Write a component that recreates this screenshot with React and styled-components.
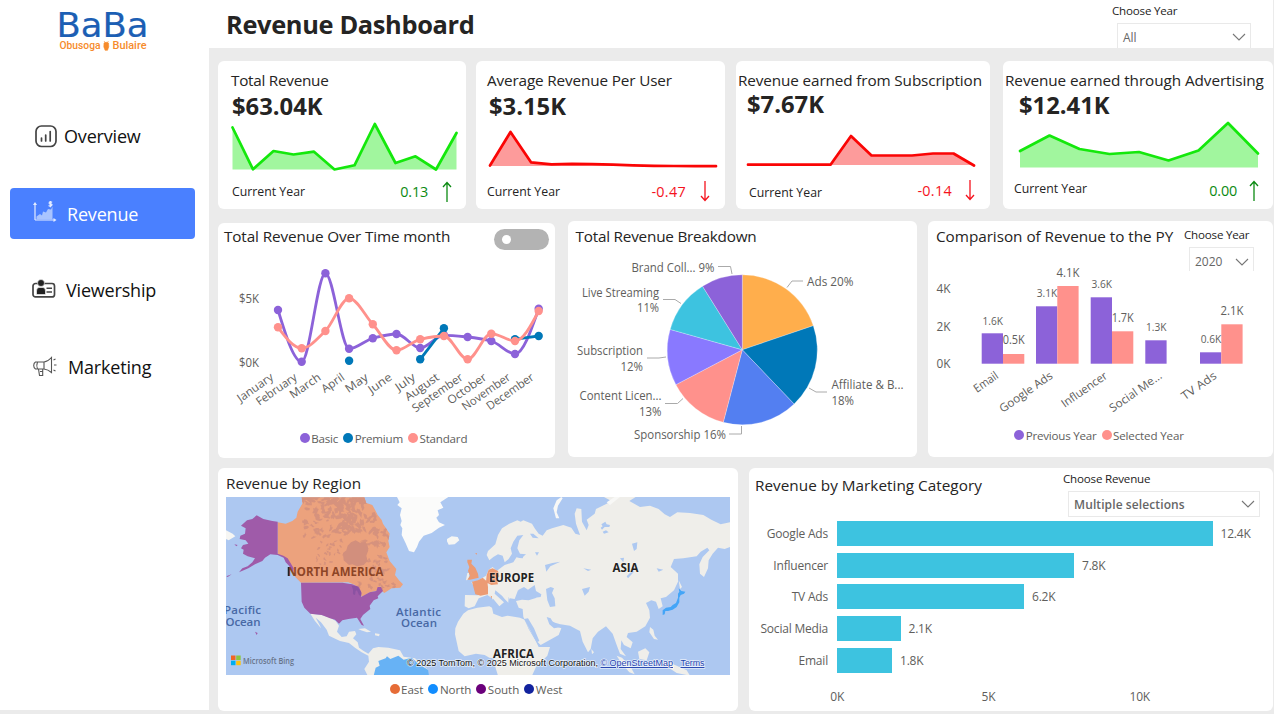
import React from "react";
import styled, { createGlobalStyle } from "styled-components";

const GlobalStyle = createGlobalStyle`
  *, *::before, *::after { box-sizing: border-box; }
  body { margin: 0; background: #ebebeb; overflow: hidden; font-family: "Open Sans", "Noto Sans", sans-serif; color: #252423; }
  svg { display: block; flex: none; }
  svg text { font-family: "Open Sans", "Noto Sans", sans-serif; }
`;

const Page = styled.div`display: flex; width: 1274px; height: 714px; background: #ebebeb;`;
const Sidebar = styled.aside`width: 209px; height: 710px; background: #fff; display: flex; flex-direction: column;`;
const LogoWrap = styled.div`height: 111px; padding: 8px 0 0 54px;`;
const Nav = styled.nav`display: flex; flex-direction: column; gap: 26.5px; padding-left: 9.5px;`;
const NavItem = styled.a`
  display: flex; align-items: center; width: 185px; height: 50.5px; border-radius: 4px;
  padding-left: ${(p) => p.$pad}px; gap: ${(p) => p.$gap}px; padding-top: ${(p) => (p.$active ? 1 : 0)}px;
  background: ${(p) => (p.$active ? "#4a80ff" : "transparent")};
  color: ${(p) => (p.$active ? "#fff" : "#111")};
  font-size: 18px; letter-spacing: -0.18px; white-space: nowrap;
`;
const Main = styled.main`width: 1065px; display: flex; flex-direction: column;`;
const Header = styled.header`
  width: 1064px; height: 48px; background: #fff; display: flex; justify-content: space-between;
  padding: 0 22px 0 17px; overflow: hidden;
`;
const PageTitle = styled.h1`margin: 0; font-size: 25.4px; line-height: 49px; letter-spacing: -0.35px; font-weight: 700;`;
const Content = styled.div`display: flex; flex-direction: column; padding: 13px 0 0 9px;`;
const Row = styled.section`display: grid; grid-template-columns: ${(p) => p.$cols}; column-gap: ${(p) => p.$gap}px; margin-bottom: ${(p) => p.$mb}px;`;
const Card = styled.article`
  background: #fff; border-radius: 6px; height: ${(p) => p.$h}px; margin-top: ${(p) => p.$mt || 0}px;
  width: ${(p) => (p.$w ? `${p.$w}px` : "auto")}; display: flex; flex-direction: column; overflow: hidden; min-width: 0;
`;
const CardTitle = styled.h2`
  margin: 0; font-weight: 400; font-size: 15.3px; line-height: 20px; white-space: nowrap; flex: none;
  height: ${(p) => (p.$h ? `${p.$h}px` : "auto")};
  letter-spacing: ${(p) => p.$ls ?? -0.1}px; padding: ${(p) => p.$pt || 0}px 0 0 ${(p) => p.$pl || 0}px;
`;
const KpiValue = styled.div`
  font-size: 23.8px; font-weight: 700; line-height: 30px; margin-top: ${(p) => p.$mt}px;
  padding-left: ${(p) => p.$pl}px; height: ${(p) => 32 - p.$mt}px;
`;
const KpiFooter = styled.div`
  display: flex; align-items: center; justify-content: space-between; height: 30px;
  padding: 0 ${(p) => p.$pr}px 0 ${(p) => p.$pl}px; margin-top: ${(p) => p.$mt || 0}px;
`;
const KpiLabel = styled.span`font-size: 12.3px; position: relative; top: ${(p) => p.$dy || 0}px;`;
const Delta = styled.span`
  display: flex; align-items: center; gap: ${(p) => p.$gap}px; font-size: 14.4px; letter-spacing: ${(p) => p.$ls}px;
  color: ${(p) => p.$color};
`;
const CardHeader = styled.div`display: flex; justify-content: space-between; height: ${(p) => p.$h}px; padding-right: ${(p) => p.$pr}px; flex: none;`;
const Field = styled.div`display: flex; flex-direction: column; padding-top: ${(p) => p.$pt}px; width: ${(p) => p.$w}px;`;
const FieldLabel = styled.label`font-size: 11.6px; line-height: 16px; letter-spacing: -0.2px; height: ${(p) => p.$h}px; flex: none; white-space: nowrap;`;
const Select = styled.div`
  display: flex; align-items: center; justify-content: space-between; margin-left: ${(p) => p.$ml}px; flex: none;
  height: ${(p) => p.$h}px; border: solid #e9e9e9; border-width: ${(p) => (p.$open ? "1px 1px 0" : "1px")};
  padding: ${(p) => p.$pt || 0}px 4px 0 5px; font-size: 12px; letter-spacing: ${(p) => p.$ls || 0}px;
  color: #666; font-weight: ${(p) => (p.$bold ? 600 : 400)};
`;
const Toggle = styled.div`
  width: 55px; height: 21px; border-radius: 11px; background: #b3b3b3; display: flex; align-items: center; padding-left: 8px; margin-top: 6px;
  &::after { content: ""; width: 9px; height: 9px; border-radius: 50%; background: #fff; }
`;
const Legend = styled.div`display: flex; justify-content: center; gap: 5px; padding-right: ${(p) => p.$pr || 0}px; height: 18px; flex: none;`;
const LegendItem = styled.span`
  display: flex; align-items: center; gap: 1.5px; font-size: 11.6px; letter-spacing: ${(p) => p.$ls ?? -0.25}px; color: #605e5c; white-space: nowrap;
  &::before { content: ""; width: 10px; height: 10px; border-radius: 50%; background: ${(p) => p.$color}; }
`;
const MapFrame = styled.div`width: 504px; height: 178px; margin: 5px 0 5px 8px; overflow: hidden; flex: none;`;
const BarList = styled.div`display: flex; flex-direction: column; gap: 6.7px; padding-top: 4px;`;
const BarRow = styled.div`display: flex; align-items: center; height: 25px; font-size: 12px; letter-spacing: -0.2px; color: #605e5c;`;
const BarName = styled.span`width: 79px; text-align: right; margin-right: 9px; white-space: nowrap;`;
const Bar = styled.span`height: 25px; background: #3dc3e0; margin-right: 8px;`;
const BarAxis = styled.div`display: flex; margin: 16px 0 0 12.5px; font-size: 12px; letter-spacing: -0.2px; line-height: 16px; color: #605e5c;`;
const Tick = styled.span`width: 151.3px; text-align: center;`;

const Chevron = () => (
  <svg width="14" height="8" viewBox="0 0 14 8" fill="none" stroke="#777" strokeWidth="1.1"><path d="M1 1l6 6 6-6" /></svg>
);

const Logo = () => (
  <svg width="100" height="46" viewBox="54 8 100 46">
    <g fontSize="33" fill="#1c5fb4" stroke="#1c5fb4" strokeWidth=".2">
      <text x="56.500" y="37.300" textLength="46" lengthAdjust="spacingAndGlyphs" style={{ fontFamily: "DejaVu Sans" }}>Ba</text>
      <text x="102.500" y="37.300" textLength="46" lengthAdjust="spacingAndGlyphs" style={{ fontFamily: "DejaVu Sans" }}>Ba</text>
    </g>
    <g fill="#f68b2c" fontSize="11">
      <text x="59.500" y="49" textLength="41" lengthAdjust="spacingAndGlyphs" style={{ fontFamily: "Roboto", fontWeight: 500 }}>Obusoga</text>
      <text x="112.500" y="49" textLength="34" lengthAdjust="spacingAndGlyphs" style={{ fontFamily: "Roboto", fontWeight: 500 }}>Bulaire</text>
      <path d="M104 43q2-1.500 4.500 0 1 4-1 7.300h-2.400q-2-3.300-1.100-7.300zM104 41l1.500 2M108.500 41l-1.500 2" stroke="#f68b2c" strokeWidth=".6" />
    </g>
  </svg>
);

const IconOverview = () => (
  <svg width="22" height="23" viewBox="0 0 22 23" fill="none" stroke="#444" strokeWidth="1.700" strokeLinecap="round">
    <rect x="1" y="1" width="20" height="20.500" rx="5.500" />
    <path d="M6.500 13v3M10.700 10v6M15.200 6.500v9.500" />
  </svg>
);
const IconRevenue = () => (
  <svg width="25" height="26" viewBox="0 0 25 26">
    <path d="M3 19V2.500M3 19h19.500" stroke="#e4ecff" strokeWidth="1.200" fill="none" />
    <path d="M3 1l-2 3h4zM24.500 19l-3-2v4z" fill="#e4ecff" />
    <path d="M4.500 18.500v-3l3.500-2.500 2 1.500 1-4 3 1 2-3.500 3 .500 1.500-3V18.500z" fill="#a9c4ff" />
    <path d="M20.200 1.300q-3-1.200-3 .600t2 1.100q1.700.700 0 1.700t-2.500-.300M18.600 0v6.200" stroke="#e4ecff" strokeWidth="1.200" fill="none" />
  </svg>
);
const IconViewer = () => (
  <svg width="24" height="22" viewBox="0 0 24 22" fill="none" stroke="#444">
    <rect x="1" y="4.500" width="21.500" height="13.400" rx="2.500" strokeWidth="1.700" />
    <path d="M14.500 9.200h5.500M14.500 13h5.500" strokeWidth="1.500" />
    <path d="M4.500 15.500v-3.500q0-3.500 2.500-3.500h4q2.500 0 2.500 3.500v3.500z" fill="#222" stroke="#fff" strokeWidth=".6" />
    <circle cx="9" cy="4" r="3.500" fill="#222" stroke="#fff" strokeWidth=".6" />
  </svg>
);
const IconMarketing = () => (
  <svg width="24" height="22" viewBox="0 0 24 22" fill="none" stroke="#555" strokeWidth="1.100">
    <path d="M2.500 6h8.500q4-.500 7.500-4.500v15q-3.500-3-7.500-3.500h-8.500q-1.800-1-1.800-3.500t1.800-3.500zM11 6v7M4.500 6q-1.500 3.500 0 7M18.500 1v16" />
    <path d="M5.500 13l1 6.500h3.200v-6.500M7 15.500h2.500M20.500 4l2-1M21 9h2.500M20.500 14l2 1" />
  </svg>
);

const ArrowIcon = ({ up }) => (
  <svg width="10" height="21" viewBox="0 0 10 21" fill="none" stroke="currentColor" strokeWidth="1.300">
    <path d={up ? "M5 21V2M1 6l4-4.500L9 6" : "M5 0v19M1 15l4 4.500L9 15"} />
  </svg>
);

/* Fixed-width chart label */
const Label = ({ x, y, w, anchor, children, size = 12, ...rest }) => (
  <text x={x} y={y} fontSize={size} fill="#605e5c" textLength={w} lengthAdjust="spacingAndGlyphs" textAnchor={anchor} {...rest}>{children}</text>
);

const GREEN = "#14e80c", RED = "#fa0505";
const kpis = [
  { title: "Total Revenue", value: "$63.04K", x: 218, w: 248, up: true, delta: "0.13", tp: 13, vp: 14, vm: 1, fp: 14, fr: 14, gap: 14, base: 169.5, ls: -0.27,
    pts: [[232.500, 127.500], [253, 169.300], [273.500, 151], [293.500, 154.500], [314, 151.700], [334.500, 169.500], [354.500, 165.300], [374.800, 124], [395.500, 163], [415.500, 156.300], [436, 169.500], [456.500, 133]] },
  { title: "Average Revenue Per User", value: "$3.15K", x: 476, w: 249, delta: "-0.47", tp: 11, vp: 13, vm: 1, fp: 11, fr: 15, gap: 14, base: 166, ls: -0.15,
    pts: [[490, 165.500], [510.500, 132], [531, 162.300], [551.500, 164.300], [572, 163.800], [592, 164.200], [613, 164.600], [633, 165.300], [654, 165.800], [674, 166], [695, 166.100], [716, 166.200]] },
  { title: "Revenue earned from Subscription", value: "$7.67K", x: 736, w: 254, delta: "-0.14", tp: 2, vp: 11, vm: -1, fp: 13, fr: 15, gap: 13, base: 165, fy: -1, ly: 2, ls: -0.13,
    pts: [[748, 164.700], [830.500, 164.700], [851, 136], [871.500, 155.500], [912, 155.500], [933, 153.500], [953.500, 153.500], [974, 165.500]] },
  { title: "Revenue earned through Advertising", value: "$12.41K", x: 1003, w: 270, up: true, delta: "0.00", tp: 2, vp: 16, vm: 0, fp: 11, fr: 14, gap: 12, base: 167.500, fy: -1, ly: -2, ls: -0.07,
    pts: [[1020, 151], [1049.500, 135.500], [1079.500, 149], [1109.500, 154], [1139, 152], [1168.500, 160.500], [1198.500, 150.500], [1228, 123], [1258, 153.500]] },
];

const Kpi = ({ k }) => {
  const line = k.pts.map((p) => p.join(",")).join(" ");
  const color = k.up ? GREEN : RED;
  const first = k.pts[0][0], last = k.pts[k.pts.length - 1][0];
  return (
    <Card $h={148} $w={k.w}>
      <CardTitle $pt={9} $pl={k.tp} $ls={k.ls}>{k.title}</CardTitle>
      <KpiValue $mt={k.vm} $pl={k.vp}>{k.value}</KpiValue>
      <svg width={k.w} height="54" viewBox={`${k.x} 122 ${k.w} 54`} style={{ overflow: "visible" }}>
        <polygon points={`${first},${k.base} ${line} ${last},${k.base}`} fill={color} opacity=".4" />
        <polyline points={line} fill="none" stroke={color} strokeWidth="2.700" strokeLinejoin="round" strokeLinecap="round" />
      </svg>
      <KpiFooter $pl={k.fp} $pr={k.fr} $mt={k.fy}>
        <KpiLabel $dy={k.ly}>Current Year</KpiLabel>
        <Delta $color={k.up ? "#0b8a12" : "#f5121d"} $gap={k.gap} $ls={k.up ? -0.2 : 0.3}>{k.delta}<ArrowIcon up={k.up} /></Delta>
      </KpiFooter>
    </Card>
  );
};

/* Monotone cubic interpolation through the points */
function smooth(pts) {
  const n = pts.length, d = [], m = [];
  for (let i = 0; i < n - 1; i++) d.push((pts[i + 1][1] - pts[i][1]) / (pts[i + 1][0] - pts[i][0]));
  for (let i = 0; i < n; i++) {
    if (i === 0) m.push(d[0]);
    else if (i === n - 1) m.push(d[n - 2]);
    else if (d[i - 1] * d[i] <= 0) m.push(0);
    else m.push((2 * d[i - 1] * d[i]) / (d[i - 1] + d[i]));
  }
  if (n > 2) { m[0] = (3 * d[0] - m[1]) / 2; m[n - 1] = (3 * d[n - 2] - m[n - 2]) / 2; }
  let s = `M${pts[0]}`;
  for (let i = 0; i < n - 1; i++) {
    const h = (pts[i + 1][0] - pts[i][0]) / 3;
    s += `C${pts[i][0] + h},${pts[i][1] + m[i] * h} ${pts[i + 1][0] - h},${pts[i + 1][1] - m[i + 1] * h} ${pts[i + 1]}`;
  }
  return s;
}
const mx = (i) => 278 + i * 23.7;
const lineSeries = [
  { color: "#8c62d9", runs: [[0, 310, 361.7, 273.3, 348.7, 338.3, 334, 348, 335.3, 337, 341, 354, 308.7]] },
  { color: "#0078b8", runs: [[3, 360.7], [6, 359.3, 328.3], [10, 339.3, 336]] },
  { color: "#ff918c", runs: [[0, 327.3, 348.3, 331, 298.3, 324.3, 350.3, 339.3, 336, 359.3, 333.7, 341, 311]] },
];
const months = [["January", 41], ["February", 47], ["March", 35], ["April", 25], ["May", 25], ["June", 26], ["July", 22], ["August", 39], ["September", 59], ["October", 45], ["November", 56], ["December", 55]];

const LineChart = () => (
  <svg width="337" height="173" viewBox="218 256 337 173">
    <Label x="239" y="303" w="20">$5K</Label>
    <Label x="239" y="367" w="20">$0K</Label>
    {lineSeries.map((s) => (
      <g key={s.color} stroke={s.color} fill={s.color}>
        {s.runs.map(([start, ...ys]) => {
          const pts = ys.map((y, i) => [mx(start + i), y]);
          return (
            <g key={start}>
              {pts.length > 1 && <path d={smooth(pts)} fill="none" strokeWidth="2.800" />}
              {pts.map((p) => <circle key={p[0]} cx={p[0]} cy={p[1]} r="4.200" stroke="none" />)}
            </g>
          );
        })}
      </g>
    ))}
    {months.map(([m, w], i) => (
      <Label key={m} x="0" y="0" w={w} anchor="end" size={11.5} transform={`translate(${mx(i) - 3.800} 379) rotate(-35)`}>{m}</Label>
    ))}
  </svg>
);

const slices = [[0, 71.2, "#ffae4c"], [71.2, 136.3, "#0078b8"], [136.3, 194.7, "#537ff1"], [194.7, 242.3, "#ff918c"], [242.3, 285.8, "#8979ff"], [285.8, 328, "#3dc3e0"], [328, 360, "#8c62d9"]];
const onPie = (deg) => [742.3 + 75 * Math.sin((deg * Math.PI) / 180), 349.8 - 75 * Math.cos((deg * Math.PI) / 180)];
const PieChart = () => (
  <svg width="349" height="200" viewBox="568 255 349 200">
    {slices.map(([a, b, c]) => (
      <path key={c} d={`M742.3,349.8L${onPie(a)}A75,75 0 0 1 ${onPie(b)}Z`} fill={c} stroke="#fff" strokeOpacity=".5" strokeWidth=".5" />
    ))}
    <path d="M718 266.500h12.500l1.500 7.500M663 299.500h12l6 4M647 358h12l7-1M665 403.500h12.500l5.500-5M729 434h12.500v-8M787 287.500l5-6.500h11M809 388l7 4h11" fill="none" stroke="#aaa" />
    <Label x="631.500" y="272" w="83">Brand Coll... 9%</Label>
    <Label x="582" y="296.500" w="77">Live Streaming</Label>
    <Label x="637" y="312" w="22">11%</Label>
    <Label x="577" y="355" w="66">Subscription</Label>
    <Label x="620.500" y="371" w="22.500">12%</Label>
    <Label x="579.500" y="400" w="82">Content Licen...</Label>
    <Label x="639" y="416" w="22.500">13%</Label>
    <Label x="634" y="439" w="92">Sponsorship 16%</Label>
    <Label x="807" y="286" w="46.500">Ads 20%</Label>
    <Label x="831.500" y="389" w="72">Affiliate &amp; B...</Label>
    <Label x="831.500" y="405" w="22.500">18%</Label>
  </svg>
);

const groups = [
  { name: "Email", w: 27, x: 981.700, a: 333.3, b: 354, la: ["1.6K", 325, 20.5], lb: ["0.5K", 344, 22] },
  { name: "Google Ads", w: 62, x: 1036, a: 306.3, b: 286, la: ["3.1K", 297, 20.5], lb: ["4.1K", 277, 23] },
  { name: "Influencer", w: 53, x: 1090.700, a: 297.3, b: 331.3, la: ["3.6K", 288, 20.5], lb: ["1.7K", 322, 22] },
  { name: "Social Me...", w: 61, x: 1145.300, a: 340.3, la: ["1.3K", 331, 20.5] },
  { name: "TV Ads", w: 40, x: 1200, a: 352.3, b: 324.3, la: ["0.6K", 343, 20.5], lb: ["2.1K", 315, 23] },
];
const ColumnChart = () => (
  <svg width="345" height="160" viewBox="928 266 345 160">
    {[["4K", 293], ["2K", 331], ["0K", 368]].map(([t, y]) => <Label key={t} x="936.500" y={y} w="14">{t}</Label>)}
    {groups.map((g) => (
      <g key={g.name}>
        <rect x={g.x} y={g.a} width="21.300" height={363.7 - g.a} fill="#8c62d9" />
        {g.b && <rect x={g.x + 21.300} y={g.b} width="21.300" height={363.7 - g.b} fill="#ff918c" />}
        <Label x={g.x + 11} y={g.la[1]} w={g.la[2]} anchor="middle" size={11.500}>{g.la[0]}</Label>
        {g.lb && <Label x={g.x + 32} y={g.lb[1]} w={g.lb[2]} anchor="middle">{g.lb[0]}</Label>}
        <Label x="0" y="0" w={g.w} anchor="end" size={11.500} transform={`translate(${g.x + 17.500} 377.500) rotate(-35)`}>{g.name}</Label>
      </g>
    ))}
  </svg>
);

const CANADA = "M260 97L448 97 454 114 472 120 480 134 488 150 500 165 504 176 524 206 520 228 524 246 514 262 524 288 544 312 540 330 552 346 564 358 556 368 530 370 508 384 498 376 498 364 484 378 464 382 440 396 436 380 420 360 400 352 258 353 240 335 225 300 210 278 188 268 188 172 212 176 232 168 244 158 248 140 262 116Z";

/* Seeded terrain patches: x range, y range, count, patch size */
function terrain(zones) {
  let seed = 11;
  const rnd = () => { seed = (seed * 16807) % 2147483647; return seed / 2147483647; };
  return zones.map(([x0, x1, y0, y1, n, size]) => {
    let d = "";
    for (let i = 0; i < n; i++) {
      const cx = x0 + rnd() * (x1 - x0), cy = y0 + rnd() * (y1 - y0), tilt = rnd() * 6.28;
      for (let j = 0; j < 9; j++) {
        const a = (j / 9) * 6.28, r = size * (0.35 + rnd());
        const px = Math.cos(a) * r * 1.3, py = Math.sin(a) * r * 0.7;
        d += `${j ? "L" : "M"}${(cx + px * Math.cos(tilt) - py * Math.sin(tilt)).toFixed(1)} ${(cy + px * Math.sin(tilt) + py * Math.cos(tilt)).toFixed(1)}`;
      }
      d += "Z";
    }
    return d;
  }).join("");
}
const TERRAIN = terrain([
  [265, 445, 96, 118, 34, 10], [270, 460, 118, 160, 40, 8], [360, 480, 150, 205, 40, 9], [440, 520, 190, 250, 26, 8],
  [265, 350, 160, 225, 26, 6], [300, 390, 225, 300, 26, 4.5], [455, 520, 270, 350, 26, 5.5], [430, 540, 340, 375, 16, 6],
]);

const WorldMap = () => (
  <svg width="504" height="178" viewBox="226 497 504 178">
    <clipPath id="canada"><path d={CANADA} /></clipPath>
    <rect x="226" y="497" width="504" height="178" fill="#adc8f1" />
    {/* Americas and Greenland */}
    <g transform="translate(215 465) scale(.33333)">
      <path fill="#fbfbfa" d="M543 90L554 112 547 120 560 130 555 150 560 168 556 180 562 190 560 210 572 235 582 258 597 262 606 246 612 230 626 212 650 204 672 188 690 180 672 172 664 158 672 150 668 136 685 128 676 112 700 96 700 90Z" />
      <path fill="#f6f6f3" d="M696 222l14-8 18 2 5 10-14 12-18 1-5-10zM33 196l20 10 8 8-20 12-8-4z" />
      <path fill="#efeeea" d="M286 446L320 450 345 458 362 468 372 482 366 500 380 516 395 514 402 500 420 498 424 508 414 520 428 532 432 548 446 558 460 566 474 550 490 546 520 548 555 556 566 575 600 580 640 615 640 632 458 632 448 612 462 590 460 572 440 562 420 548 402 534 375 528 342 512 335 494 318 472 302 458 315 482 318 490 300 468Z" />
      <path fill="#efeeea" d="M430 492l20-2 18 10-12 2-18-6zM480 505l14 2-2 7-12-3z" />
      <path fill="#67b2f5" d="M476 632L482 608 494 602 490 588 512 580 516 574 526 582 550 572 566 584 590 578 612 598 640 615 642 632Z" />
      <path fill="#eca27d" d={CANADA} />
      <g clipPath="url(#canada)" fill="#d28f7d">
        <path d={TERRAIN} opacity=".85" />
        <path d="M408 232l14-6 14 8 16-2 6 10 2 14-6 16 4 16-12 12-20 4-14-6-10 2-16-14-2-22 10-8 4-14z" />
      </g>
      <g fill="#9f5ba9">
        <path d="M188 170L172 168 145 162 125 151 112 162 96 166 78 182 92 190 90 206 76 212 74 222 92 226 100 236 84 240 78 250 86 254 84 266 98 274 120 280 112 292 98 304 82 310 72 322 100 310 120 298 142 288 150 278 166 268 188 270 206 278 212 292 222 302 234 322 236 310 218 280 205 272 188 266Z" />
        <path d="M258 353L382 353 412 358 432 366 440 384 438 396 464 382 484 378 488 366 498 366 504 378 488 394 490 400 476 406 464 422 466 432 444 450 436 462 447 482 440 480 426 458 400 462 382 466 372 476 360 464 345 460 320 450 286 446 268 428 260 410Z" />
        <path d="M58 238l10 2-4 4zM34 334l16-6-12 8zM120 500l8 4-3 6z" />
      </g>
      <path fill="#8650a0" d="M410 362l16 2 12 16 0 14-6-4-6-14-4 2-2 12-6-2 0-14z" opacity=".8" />
    </g>
    {/* Europe, Africa, Asia */}
    <g transform="translate(470 465) scale(.33333)">
      <path fill="#efeeea" d="M-45 508L-44 490 -36 470 -20 446 -6 436 22 428 58 424 66 428 70 446 96 456 112 452 150 458 164 464 176 492 196 526 206 546 240 546 232 572 198 606 186 632 84 632 76 606 72 580 58 578 44 570 18 566 -16 574 -34 558Z" />
      <path fill="#efeeea" d="M-15 390L24 391 18 374 4 352 22 348 48 332 56 314 68 306 80 318 104 300 130 292 140 276 156 278 168 268 150 266 142 250 148 226 160 210 142 212 130 230 122 250 126 266 116 282 104 292 98 272 84 268 70 276 58 286 50 270 54 258 76 238 84 210 96 190 118 176 142 166 152 170 160 166 186 176 194 190 206 206 218 212 230 196 246 190 280 180 304 188 316 206 330 210 318 176 314 146 320 130 334 132 336 170 350 196 356 180 350 164 374 146 378 132 410 116 424 108 402 96 500 94 478 108 510 126 540 122 566 132 584 148 600 156 622 142 660 144 700 150 724 164 752 178 780 172 780 246 764 252 744 248 728 266 716 286 714 310 702 336 690 326 688 298 698 276 718 256 712 248 692 260 680 274 640 280 612 282 602 306 624 326 624 350 612 376 588 396 572 400 578 424 566 432 558 410 544 406 528 414 538 436 540 458 526 484 500 500 474 504 470 516 488 532 482 550 462 540 454 526 452 552 468 574 450 566 440 540 428 506 408 484 384 500 368 520 362 552 354 562 338 530 330 498 318 492 300 482 262 476 244 468 234 458 240 478 274 490 266 510 212 540 202 530 178 492 160 456 158 432 146 428 138 408 156 404 176 406 200 398 186 386 168 374 144 376 134 402 120 400 118 416 104 402 96 392 76 376 74 386 102 412 88 424 70 402 52 390 26 400 14 424 -4 430 -16 424Z" />
      <path fill="#f8f8f6" d="M258 160l-8-30 10-24 14-10 4 4-14 22-4 20 8 18zM410 112l24-16 16 0-30 24z" />
      <g fill="#adc8f1">
        <path d="M146 374l16-8 12 8 20-14 4 18 16 10-2 8-30 4-32 2zM228 372l14-6 10 4-6 14 8 16 2 24-16 2-8-20zM162 462l12-2 18 30 16 38-8 4-18-34zM230 456l12 4 8 14 16 2 8 10-22 4-14-12zM116 396l10 22 8 2-2 10-18-6zM138 278l22-4-2 6zM195 262l12 0-6 10zM180 206l10 0 16 14-18-2zM394 178l12-8 4 8 10 2-2 6-14 0-8 8-4-6 6-4zM398 200l10-4 8 6-14 4zM486 236l16-4-2 20-8 6zM225 300l22-6 24-4-30 14-12 16zM336 372l24-6-4 14-12 12zM560 310l20 4-14 6zM470 334l18-18 4 4-18 20zM340 310l24 4-10 4zM450 280l12-2-2 14z" />
      </g>
      <path fill="#efeeea" d="M440 572l16 6 26 28 12 22-16-6-24-28zM504 560l22-10 12 12-8 24-22-4zM540 486l10 8 4 18 10 12-12-2-14-20zM566 586l30 6 24 10 30 14 10 16-40-8-30-20zM364 552l8 10-6 6zM626 346l10 20-6 6zM64 390l8 6-4 8z" />
      <path fill="#efeeea" d="M-12 346l4-22 6 0-2 20z" />
      <g fill="#ec9b73">
        <path d="M-8 284l14 0-2 12 12 12 8 18 2 12-26 6-8 0 8-12-6-14 4-12-6-14zM6 350l18-4 14-8 14 12 2 16 0 22-12 2-10 2-16-4zM50 330l6-16 12-4 16 8 4 16-8 8 4 16-20 2-16-8zM16 264l5 0-2 6zM62 392l4 2-2 8z" />
      </g>
      <path fill="#44a5f7" d="M578 436l10-8 14-2 6-6 10-6 6-16 0-12 4-6-2-10 8 8 12 2-4 6-10 4-4 8 0 14-8 14-12 8-14 4-8 0-2 10-6 2z" />
    </g>
    <g fontSize="12" fontWeight="700" fill="#222" stroke="#ffffff" strokeOpacity=".35" strokeWidth="1.500" paintOrder="stroke">
      <text x="489" y="582" textLength="45" lengthAdjust="spacingAndGlyphs">EUROPE</text>
      <text x="612.500" y="572" textLength="26" lengthAdjust="spacingAndGlyphs">ASIA</text>
      <text x="493" y="658" textLength="41" lengthAdjust="spacingAndGlyphs">AFRICA</text>
      <text x="287.500" y="576" textLength="96" lengthAdjust="spacingAndGlyphs" fill="#8d4526" strokeOpacity="0">NORTH AMERICA</text>
    </g>
    <path d="M288.500 567v9" stroke="#222" strokeWidth="1.500" />
    <g fontSize="11.500" fill="#4869a5" fontWeight="600">
      <text x="224" y="613.500" textLength="37">Pacific</text>
      <text x="225.500" y="625.500" textLength="35">Ocean</text>
      <text x="396" y="615.500" textLength="45">Atlantic</text>
      <text x="401" y="627" textLength="36">Ocean</text>
    </g>
    <path fill="#f26522" d="M231 655.500h4.500v4.500H231z" /><path fill="#8dc63f" d="M236.200 655.500h4.500v4.500h-4.500z" />
    <path fill="#00aeef" d="M231 660.700h4.500v4.500H231z" /><path fill="#ffc20e" d="M236.200 660.700h4.500v4.500h-4.500z" />
    <text x="243" y="664" fontSize="9.500" fill="#68748a" textLength="51" lengthAdjust="spacingAndGlyphs" fontWeight="600">Microsoft Bing</text>
    <g fontSize="9.700" fill="#111" stroke="#fff" strokeOpacity=".7" strokeWidth="1.500" paintOrder="stroke">
      <text x="407" y="666" textLength="191" lengthAdjust="spacingAndGlyphs" style={{ fontFamily: "Liberation Sans" }}>© 2025 TomTom, © 2025 Microsoft Corporation,</text>
      <text x="600.500" y="666" textLength="72.500" lengthAdjust="spacingAndGlyphs" fill="#2545b0" textDecoration="underline" style={{ fontFamily: "Liberation Sans" }}>© OpenStreetMap</text>
      <text x="680.500" y="666" textLength="24" lengthAdjust="spacingAndGlyphs" fill="#2545b0" textDecoration="underline" style={{ fontFamily: "Liberation Sans" }}>Terms</text>
    </g>
  </svg>
);

const categories = [["Google Ads", 375.5, "12.4K"], ["Influencer", 237, "7.8K"], ["TV Ads", 187, "6.2K"], ["Social Media", 63.5, "2.1K"], ["Email", 55, "1.8K"]];

export default function App() {
  return (
    <Page>
      <GlobalStyle />
      <Sidebar>
        <LogoWrap><Logo /></LogoWrap>
        <Nav>
          <NavItem $pad={25.5} $gap={7}><IconOverview />Overview</NavItem>
          <NavItem $active $pad={22.5} $gap={10}><IconRevenue />Revenue</NavItem>
          <NavItem $pad={22.5} $gap={10}><IconViewer />Viewership</NavItem>
          <NavItem $pad={23.5} $gap={11}><IconMarketing />Marketing</NavItem>
        </Nav>
      </Sidebar>
      <Main>
        <Header>
          <PageTitle>Revenue Dashboard</PageTitle>
          <Field $pt={3} $w={139}>
            <FieldLabel $h={20}>Choose Year</FieldLabel>
            <Select $ml={5} $h={27} $open>All<Chevron /></Select>
          </Field>
        </Header>
        <Content>
          <Row $cols="258px 260px 267px 270px" $gap={0} $mb={12}>
            {kpis.map((k) => <Kpi key={k.title} k={k} />)}
          </Row>
          <Row $cols="338px 349px 345px" $gap={11.5} $mb={10}>
            <Card $h={235} $mt={2} $w={337}>
              <CardHeader $h={33} $pr={6}>
                <CardTitle $pt={3} $pl={6} $ls={-0.13}>Total Revenue Over Time month</CardTitle>
                <Toggle />
              </CardHeader>
              <LineChart />
              <Legend $pr={6}>
                <LegendItem $color="#8c62d9" $ls={-0.2}>Basic</LegendItem>
                <LegendItem $color="#0078b8" $ls={-0.2}>Premium</LegendItem>
                <LegendItem $color="#ff918c" $ls={-0.2}>Standard</LegendItem>
              </Legend>
            </Card>
            <Card $h={236}>
              <CardHeader $h={34} $pr={0}><CardTitle $pt={5} $pl={8} $ls={-0.22}>Total Revenue Breakdown</CardTitle></CardHeader>
              <PieChart />
            </Card>
            <Card $h={236}>
              <CardHeader $h={45} $pr={19}>
                <CardTitle $pt={5} $pl={8} $ls={-0.04}>Comparison of Revenue to the PY</CardTitle>
                <Field $pt={6} $w={70}>
                  <FieldLabel $h={20}>Choose Year</FieldLabel>
                  <Select $ml={5} $h={24} $open $pt={4}>2020<Chevron /></Select>
                </Field>
              </CardHeader>
              <ColumnChart />
              <Legend $pr={3}>
                <LegendItem $color="#8c62d9" $ls={-0.22}>Previous Year</LegendItem>
                <LegendItem $color="#ff918c" $ls={-0.15}>Selected Year</LegendItem>
              </Legend>
            </Card>
          </Row>
          <Row $cols="520px 524px" $gap={11} $mb={0}>
            <Card $h={243}>
              <CardTitle $pt={5} $pl={8} $ls={-0.02} $h={24}>Revenue by Region</CardTitle>
              <MapFrame><WorldMap /></MapFrame>
              <Legend $pr={4}>
                <LegendItem $color="#e66c37" $ls={-0.05}>East</LegendItem>
                <LegendItem $color="#118dff" $ls={-0.05}>North</LegendItem>
                <LegendItem $color="#6b007b" $ls={-0.05}>South</LegendItem>
                <LegendItem $color="#12239e" $ls={-0.05}>West</LegendItem>
              </Legend>
            </Card>
            <Card $h={243}>
              <CardHeader $h={49} $pr={13}>
                <CardTitle $pt={7} $pl={6} $ls={0.02}>Revenue by Marketing Category</CardTitle>
                <Field $pt={3} $w={197}>
                  <FieldLabel $h={20}>Choose Revenue</FieldLabel>
                  <Select $ml={5} $h={26} $bold $ls={0.1}>Multiple selections<Chevron /></Select>
                </Field>
              </CardHeader>
              <BarList>
                {categories.map(([name, w, value]) => (
                  <BarRow key={name}><BarName>{name}</BarName><Bar style={{ width: w }} />{value}</BarRow>
                ))}
              </BarList>
              <BarAxis><Tick>0K</Tick><Tick>5K</Tick><Tick>10K</Tick></BarAxis>
            </Card>
          </Row>
        </Content>
      </Main>
    </Page>
  );
}
